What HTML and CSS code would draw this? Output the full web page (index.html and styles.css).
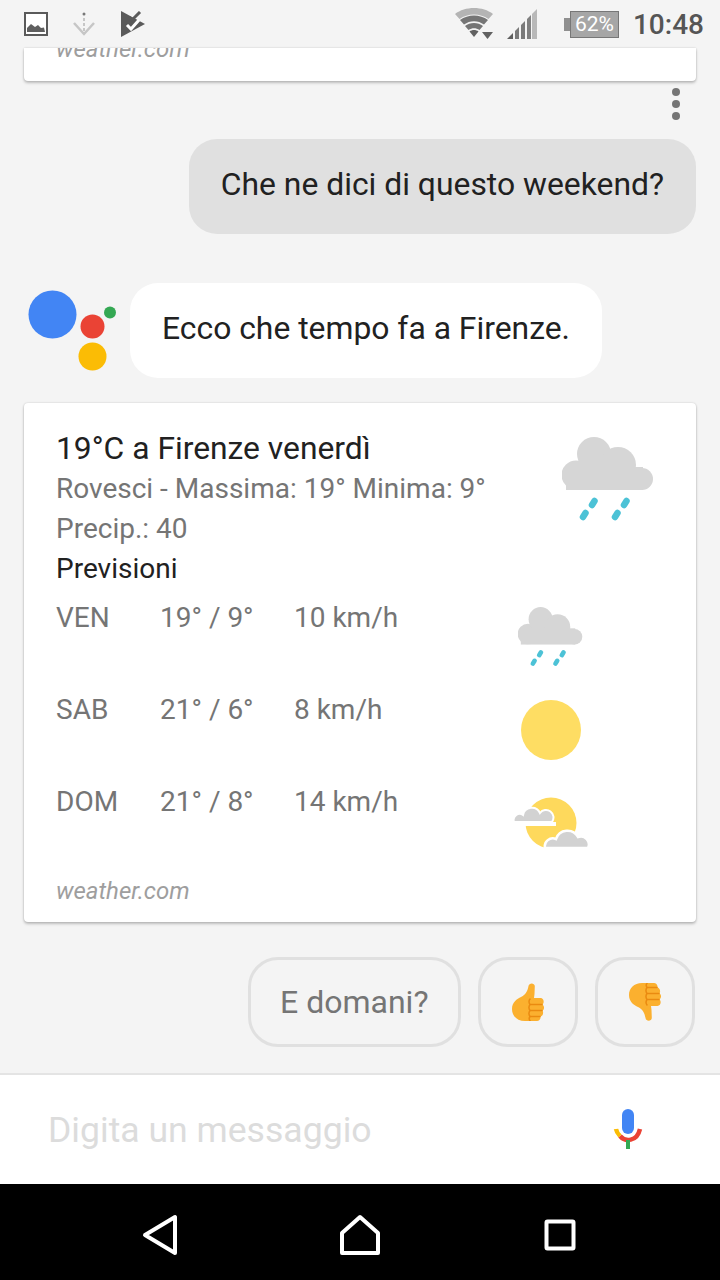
FILE: index.html
```html
<!DOCTYPE html>
<html lang="it">
<head>
  <meta charset="UTF-8">
  <meta name="viewport" content="width=device-width, initial-scale=1.0">
  <title>Assistant</title>
  <link rel="stylesheet" href="styles.css">
</head>
<body>
  <svg class="defs" width="0" height="0">
    <symbol id="rain-cloud" viewBox="0 0 92 86">
      <g fill="#d6d6d6">
        <circle cx="14" cy="38" r="14.500"/>
        <circle cx="32" cy="17" r="17"/>
        <circle cx="56" cy="28" r="18"/>
        <circle cx="80" cy="42" r="11"/>
        <rect x="4" y="30" width="77" height="23"/>
      </g>
      <g stroke="#4cc2d6" stroke-width="6.500" stroke-linecap="round">
        <path d="M32.500 64 30 68M23.500 76 21 80M64.500 64 62 68M55.500 76 53 80"/>
      </g>
    </symbol>
    <symbol id="thumb" viewBox="0 0 32 38">
      <path fill="#fbb02f" d="M16.500 3C17 -0.500 22.500 -0.500 22.800 3L22.500 11 22 15H28.500C32 15 32.500 20 30.500 21.500 32.500 23 32.500 26.500 30.500 27.500 31.800 29.500 31 33 28.500 33.500 29 36 27 38 25 38H13C5 38 0 33 0 26 0 19 5 16 9 14 13 12 15.500 9 16.500 3Z"/>
      <path fill="none" stroke="#ea8a10" stroke-width="1.500" stroke-linecap="round" d="M18 16C16.500 18 17 20 18 21.500H30M18 21.500C16.500 23.500 17 26 18 27.500H30M18 27.500C16.500 29.500 17 32 18 33.500H28M18 33.500C17 35 17 36.500 18 37.500"/>
    </symbol>
  </svg>

  <header class="status-bar">
    <div class="status-left">
      <svg width="24" height="24" viewBox="0 0 24 24">
        <rect x="1" y="1" width="22" height="22" fill="#fff" stroke="#5a5a5a" stroke-width="2"/>
        <path fill="#5f5f5f" d="M3 20V16L7 12 11 15 14 13 17 16 20 15.500 21 20Z"/>
      </svg>
      <svg width="22" height="24" viewBox="0 0 22 24">
        <circle cx="11" cy="2" r="1.500" fill="#777"/>
        <path fill="none" stroke="#c6c6c6" stroke-width="2" stroke-dasharray="3 2" d="M11 6V20"/>
        <path fill="none" stroke="#c6c6c6" stroke-width="2.500" d="M1 11 11 22 21 11"/>
      </svg>
      <svg width="26" height="26" viewBox="0 0 26 26">
        <path fill="#5a5a5a" d="M1 0 25 13 1 26Z"/>
        <path fill="none" stroke="#fff" stroke-width="3" d="M7 14 11 18 19 9"/>
        <path fill="none" stroke="#5a5a5a" stroke-width="3" d="M9 6 12 9 20 1"/>
      </svg>
    </div>
    <div class="status-right">
      <svg width="38" height="32" viewBox="0 0 38 32">
        <path fill="#b4b4b4" d="M0 6C10 -2 28 -2 38 6L33.500 11C25 5 13 5 4.500 11Z"/>
        <path fill="#757575" d="M5 12C13 6 25 6 33 12L29 16.500C23 12 15 12 9 16.500Z"/>
        <path fill="#757575" d="M10 18C15 14 23 14 28 18L24.500 22C21 19.500 17 19.500 13.500 22Z"/>
        <path fill="#616161" d="M14.500 23.500C17 21.500 21 21.500 23.500 23.500L19 29Z"/>
        <path fill="#616161" d="M27 24H38L32.500 31Z"/>
      </svg>
      <svg width="30" height="30" viewBox="0 0 30 30">
        <path fill="#5f5f5f" d="M0 30 6 24V30Z"/>
        <path fill="#7a7a7a" d="M8 22 12 18V30H8Z"/>
        <path fill="#7a7a7a" d="M14 16 18 12V30H14Z"/>
        <path fill="#808080" d="M20 10 24 6V30H20Z"/>
        <path fill="#b8b8b8" d="M25 5 30 0V30H25Z"/>
      </svg>
      <div class="battery">
        <span class="battery-nub"></span>
        <span class="battery-body">62%</span>
      </div>
      <span class="clock">10:48</span>
    </div>
  </header>

  <main class="chat">
    <section class="card card-cut">
      <span class="source">weather.com</span>
    </section>

    <div class="more">
      <span></span><span></span><span></span>
    </div>

    <div class="bubble bubble-user">Che ne dici di questo weekend?</div>

    <div class="assistant-row">
      <svg width="88" height="82" viewBox="0 0 88 82">
        <circle cx="24.500" cy="24.500" r="24" fill="#4285f4"/>
        <circle cx="64.500" cy="36.500" r="12" fill="#ea4335"/>
        <circle cx="64.500" cy="66.500" r="14" fill="#fbbc05"/>
        <circle cx="82" cy="22.500" r="6" fill="#34a853"/>
      </svg>
      <div class="bubble">Ecco che tempo fa a Firenze.</div>
    </div>

    <section class="card card-weather">
      <div class="summary">
        <div class="summary-text">
          <div class="line title">19°C a Firenze venerdì</div>
          <div class="line">Rovesci - Massima: 19° Minima: 9°</div>
          <div class="line">Precip.: 40</div>
          <div class="line dark">Previsioni</div>
        </div>
        <svg class="summary-icon" width="92" height="86"><use href="#rain-cloud"/></svg>
      </div>
      <div class="forecast">
        <div class="day">
          <span>VEN</span><span>19° / 9°</span><span>10 km/h</span>
          <svg class="day-icon" width="65" height="61"><use href="#rain-cloud"/></svg>
        </div>
        <div class="day">
          <span>SAB</span><span>21° / 6°</span><span>8 km/h</span>
          <svg class="day-icon" width="62" height="62" viewBox="0 0 62 62"><circle cx="31" cy="31" r="30" fill="#fedd63"/></svg>
        </div>
        <div class="day">
          <span>DOM</span><span>21° / 8°</span><span>14 km/h</span>
          <svg class="day-icon day-icon-partly" width="78" height="56" viewBox="0 0 78 56">
            <circle cx="39" cy="27" r="25.500" fill="#fed95c"/>
            <path fill="#fff" d="M10 26H44V30H10Z"/>
            <path fill="#d2d2d2" stroke="#fff" stroke-width="2" d="M2 26A6 6 0 0 1 11 19 9 9 0 0 1 28 17 7 7 0 0 1 40 26Z"/>
            <path fill="#d2d2d2" stroke="#fff" stroke-width="2.500" d="M33 52A8 8 0 0 1 44 43 12 12 0 0 1 66 41 8 8 0 0 1 76 52Z"/>
          </svg>
        </div>
      </div>
      <span class="source">weather.com</span>
    </section>

    <div class="chips">
      <button class="chip">E domani?</button>
      <button class="chip chip-icon"><svg width="32" height="38"><use href="#thumb"/></svg></button>
      <button class="chip chip-icon"><svg class="flip" width="32" height="38"><use href="#thumb"/></svg></button>
    </div>
  </main>

  <div class="composer">
    <span class="placeholder">Digita un messaggio</span>
    <svg class="mic" width="30" height="42" viewBox="0 0 30 42">
      <rect x="9" y="1" width="12" height="25" rx="6" fill="#4285f4"/>
      <path fill="none" stroke="#ea4335" stroke-width="4.500" d="M7 28C12 34 24 34 27 21"/>
      <path fill="none" stroke="#fbbc05" stroke-width="4.500" d="M3 21C3.500 24 5 26 7 28"/>
      <rect x="13" y="32" width="4" height="9" fill="#34a853"/>
    </svg>
  </div>

  <nav class="nav-bar">
    <svg width="40" height="44" viewBox="0 0 40 44">
      <path fill="none" stroke="#fff" stroke-width="4" stroke-linejoin="round" d="M5 22 35 4V40Z"/>
    </svg>
    <svg width="44" height="44" viewBox="0 0 44 44">
      <path fill="none" stroke="#fff" stroke-width="4" stroke-linejoin="round" d="M22 4 40 20V40H4V20Z"/>
    </svg>
    <svg width="40" height="40" viewBox="0 0 40 40">
      <rect x="6.500" y="6.500" width="27" height="27" rx="1" fill="none" stroke="#fff" stroke-width="4"/>
    </svg>
  </nav>
</body>
</html>
```
FILE: styles.css
```css
:root {
  --bg: #f4f4f4;
  --text-dark: #212121;
  --text-grey: #757575;
  --chip-border: #e0e0e0;
}

* {
  box-sizing: border-box;
}

body {
  margin: 0;
  background: var(--bg);
  color: var(--text-dark);
  font-family: Roboto, "Noto Sans", sans-serif;
  width: 720px;
  height: 1280px;
  overflow: hidden;
  display: flex;
  flex-direction: column;
}

.defs {
  position: absolute;
}

.status-bar {
  height: 48px;
  flex: none;
  display: flex;
  justify-content: space-between;
  align-items: center;
  padding: 0 16px 0 24px;
}

.status-left {
  display: flex;
  align-items: center;
  gap: 25px;
}

.status-right {
  display: flex;
  align-items: center;
}

.status-right > svg:nth-child(2) {
  margin-left: 14px;
}

.battery {
  display: flex;
  align-items: center;
  margin-left: 27px;
}

.battery-nub {
  width: 6px;
  height: 13px;
  background: #8f8f8f;
}

.battery-body {
  width: 49px;
  height: 27px;
  background: #a6a6a6;
  border: 1px solid #777;
  color: #fff;
  font-size: 21px;
  line-height: 25px;
  text-align: center;
}

.clock {
  margin-left: 14px;
  font-size: 28px;
  font-weight: 500;
  color: #555;
}

.chat {
  flex: 1;
  display: flex;
  flex-direction: column;
}

.card {
  margin: 0 24px;
  background: #fff;
  border-radius: 4px;
  box-shadow: 0 0 2px rgba(0, 0, 0, 0.18), 0 2px 3px rgba(0, 0, 0, 0.22);
}

.card-cut {
  height: 33px;
  overflow: hidden;
  border-radius: 0 0 4px 4px;
  display: flex;
  align-items: flex-end;
  padding: 0 32px 18px;
}

.source {
  font-size: 24px;
  line-height: 28px;
  font-style: italic;
  color: #9e9e9e;
}

.more {
  display: flex;
  flex-direction: column;
  align-items: flex-end;
  gap: 4px;
  margin-top: 7px;
  padding-right: 40px;
}

.more span {
  width: 8px;
  height: 8px;
  border-radius: 50%;
  background: #757575;
}

.bubble {
  height: 95px;
  padding: 0 32px;
  border-radius: 28px;
  background: #fff;
  font-size: 31.85px;
  line-height: 90px;
  white-space: nowrap;
}

.bubble-user {
  align-self: flex-end;
  margin: 19px 24px 0 0;
  background: #e0e0e0;
}

.assistant-row {
  display: flex;
  align-items: center;
  gap: 14px;
  margin-top: 49px;
  padding-left: 28px;
}

.card-weather {
  margin-top: 25px;
  height: 519px;
  padding: 25px 32px 0;
}

.summary {
  display: flex;
  justify-content: space-between;
  align-items: flex-start;
}

.summary-icon {
  margin: 9px 10px 0 0;
}

.line {
  font-size: 28px;
  line-height: 40px;
  color: var(--text-grey);
}

.title {
  font-size: 31.8px;
  line-height: 41px;
  color: var(--text-dark);
}

.dark {
  color: var(--text-dark);
}

.forecast {
  margin-top: 9px;
}

.day {
  display: grid;
  grid-template-columns: 104px 134px 192px 129px;
  height: 92px;
  font-size: 28px;
  line-height: 40px;
  color: var(--text-grey);
}

.day-icon {
  justify-self: center;
  margin-top: 9px;
}

.day-icon-partly {
  margin-top: 14px;
}

.card-weather .source {
  display: block;
  margin-top: 3px;
}

.chips {
  display: flex;
  justify-content: flex-end;
  gap: 17px;
  margin-top: 35px;
  padding-right: 25px;
}

.chip {
  height: 90px;
  padding: 0 29.5px;
  background: transparent;
  border: 3px solid var(--chip-border);
  border-radius: 30px;
  color: var(--text-grey);
  font-family: inherit;
  font-size: 32px;
}

.chip-icon {
  width: 100px;
  padding: 0;
  display: flex;
  align-items: center;
  justify-content: center;
}

.flip {
  transform: scaleY(-1);
}

.composer {
  height: 111px;
  flex: none;
  display: flex;
  justify-content: space-between;
  align-items: center;
  padding: 0 77px 0 48px;
  background: #fff;
  border-top: 2px solid #e4e4e4;
}

.placeholder {
  font-size: 35.6px;
  color: #dcdcdc;
}

.mic {
  margin-bottom: 2px;
}

.nav-bar {
  height: 96px;
  flex: none;
  display: grid;
  grid-template-columns: repeat(3, 200px);
  justify-content: center;
  justify-items: center;
  align-items: center;
  padding-top: 5px;
  background: #000;
}
```
